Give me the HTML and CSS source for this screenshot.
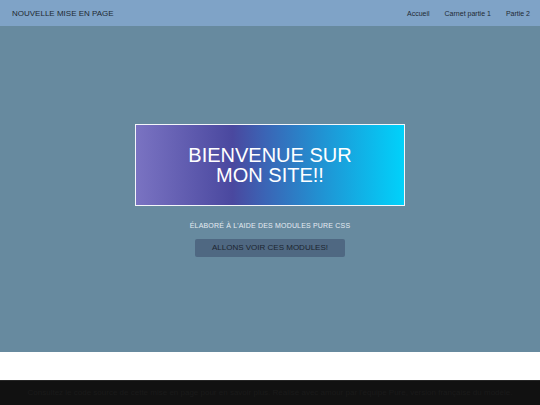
FILE: index.html
```html
<!DOCTYPE html>
<html lang="fr">
<head>
<meta charset="utf-8">
<title>Nouvelle mise en page</title>
<link rel="stylesheet" href="styles.css">
</head>
<body>
<header class="header">
  <a class="brand" href="#">NOUVELLE MISE EN PAGE</a>
  <nav class="menu">
    <a href="#">Accueil</a>
    <a href="#">Carnet partie 1</a>
    <a href="#">Partie 2</a>
  </nav>
</header>
<main class="splash">
  <h1 class="splash-head">BIENVENUE SUR<br>MON SITE!!</h1>
  <p class="splash-sub">ÉLABORÉ À L'AIDE DES MODULES PURE CSS</p>
  <a class="btn" href="#">ALLONS VOIR CES MODULES!</a>
</main>
<section class="content"></section>
<footer class="footer">
  Consultez le code source de cette mise en page pour en savoir plus. Réalisé avec amour par l'équipe Pure, version française du modèle.
</footer>
</body>
</html>
```
FILE: styles.css
```css
* { box-sizing: border-box; }
html, body { margin: 0; padding: 0; }
body {
  font-family: "Liberation Sans", Arial, sans-serif;
  background: #fff;
  height: 405px;
  overflow: hidden;
}
a { text-decoration: none; }
.header {
  height: 26px;
  background: #7fa3c7;
  display: flex;
  align-items: center;
  justify-content: space-between;
  padding: 0 3px 0 12px;
}
.brand {
  font-size: 8px;
  color: #222a33;
}
.menu { display: flex; }
.menu a {
  font-size: 7px;
  color: #222a33;
  padding: 0 7px 0 8px;
}
.splash {
  height: 326px;
  background: #678a9f;
  display: flex;
  flex-direction: column;
  align-items: center;
  padding-top: 98px;
}
.splash-head {
  margin: 0;
  width: 270px;
  border: 1px solid #f4f6fa;
  padding: 20px 10px;
  font-size: 20px;
  line-height: 20px;
  font-weight: normal;
  color: #fff;
  text-align: center;
  background: linear-gradient(90deg, #7a73c2 0%, #4a489f 36%, #3b64b5 48%, #2290d1 68%, #00d2fb 100%);
}
.splash-sub {
  margin: 16px 0 0;
  font-size: 7px;
  line-height: 8px;
  letter-spacing: 0.18px;
  color: #e4ebf2;
}
.btn {
  margin-top: 9px;
  width: 150px;
  height: 18px;
  line-height: 18px;
  text-align: center;
  font-size: 8px;
  color: #1c2530;
  background: #4f6882;
  border-radius: 2px;
}
.content {
  height: 28px;
  background: #fff;
}
.footer {
  height: 25px;
  background: #111;
  border-top: 1px solid #262626;
  color: #1a1a1a;
  font-size: 8px;
  text-align: center;
  padding-top: 7px;
  white-space: nowrap;
}
```
